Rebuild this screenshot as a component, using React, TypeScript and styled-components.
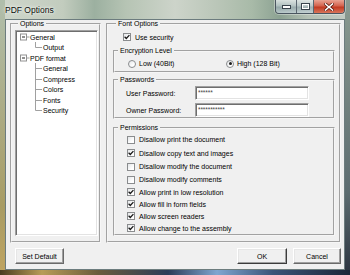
import styled, { createGlobalStyle } from 'styled-components';

const GlobalStyle = createGlobalStyle`
  html, body {
    margin: 0;
    padding: 0;
    background: #9fb0a2;
  }
  body {
    font-family: "Liberation Sans", Arial, sans-serif;
    color: #000;
  }
`;

const Window = styled.div`
  width: 350px;
  height: 275px;
  box-sizing: border-box;
  display: flex;
  flex-direction: column;
  overflow: hidden;
  background:
    linear-gradient(90deg, #4a3c22 0%, #b89c58 12%, #6a5c3c 28%, #2c3c58 48%, #7fa6d0 62%, #3a5478 78%, #1c2636 100%) bottom / 100% 5px no-repeat,
    linear-gradient(180deg, #b0beac 0%, #a89c64 75%, #c0a460 100%) left / 5px 100% no-repeat,
    linear-gradient(180deg, #8a9a90 0%, #5c6c70 70%, #2c3440 100%) right / 5px 100% no-repeat,
    linear-gradient(90deg, #cfd6cb 0%, #c2ccbe 18%, #9cb0a0 27%, #b6c4b4 36%, #cdd4ca 50%, #bac6b8 62%, #a8baa8 72%, #8ca292 80%, #b4c0b4 88%, #c4ccc4 100%);
`;

const TitleBar = styled.div`
  height: 19px;
  display: flex;
  align-items: flex-start;
  padding: 0 5px;
  flex-shrink: 0;
`;

const Title = styled.span`
  font-size: 8.5px;
  line-height: 20px;
  color: #0c0c0c;
  text-shadow: 0 0 4px #f4f8f4, 0 0 2px #f4f8f4;
`;

const Controls = styled.div`
  margin-left: auto;
  display: flex;
  height: 13px;
  border: 1px solid #4a5660;
  border-top: none;
  border-radius: 0 0 4px 4px;
  overflow: hidden;
  box-shadow: 0 0 0 1px rgba(255, 255, 255, 0.35);
`;

const ControlButton = styled.div<{ $w: number; $close?: boolean }>`
  width: ${(p) => p.$w}px;
  display: flex;
  align-items: center;
  justify-content: center;
  background: ${(p) =>
    p.$close
      ? 'linear-gradient(180deg, #e8a393 0%, #d4634e 45%, #c23a22 55%, #d8755a 100%)'
      : 'linear-gradient(180deg, rgba(240,244,246,.75) 0%, rgba(190,204,210,.7) 45%, rgba(150,168,176,.7) 55%, rgba(200,214,220,.75) 100%)'};
  & + & {
    border-left: 1px solid #5a6670;
  }
`;

const Client = styled.div`
  flex: 1;
  margin: 0 5px 5px;
  background: #f0f0f0;
  border: 1px solid #6c7c7e;
  padding: 0 3px 0 4px;
  display: flex;
  flex-direction: column;
  color: #000;
`;

const Groups = styled.div`
  display: flex;
  gap: 5px;
  height: 223px;
`;

const Group = styled.fieldset<{ $width?: number; $pad?: string }>`
  margin: 0;
  min-width: 0;
  box-sizing: border-box;
  border: 2px groove #f6f6f6;
  padding: ${(p) => p.$pad ?? '0'};
  ${(p) => (p.$width ? `width: ${p.$width}px; flex-shrink: 0;` : 'flex: 1;')}
`;

const SubGroup = styled(Group)<{ $top: number }>`
  margin-top: ${(p) => p.$top}px;
`;

const Legend = styled.legend`
  font-size: 7px;
  line-height: 8px;
  padding: 0 2px;
  margin-left: 3px;
`;

const LegendText = styled.span`
  color: #000;
`;

const Tree = styled.div`
  width: 83px;
  height: 206px;
  box-sizing: border-box;
  margin-top: 2px;
  background: #fff;
  border: 1px solid;
  border-color: #a0a0a0 #ffffff #ffffff #a0a0a0;
  box-shadow: inset 1px 1px 0 #6e6e6e, inset -1px -1px 0 #e3e3e3;
  padding-top: 1px;
`;

const TreeRow = styled.div<{ $h: number }>`
  display: flex;
  align-items: center;
  height: ${(p) => p.$h}px;
  font-size: 7px;
  white-space: nowrap;
`;

const TreeLabel = styled.span`
  color: #000;
`;

const CheckRow = styled.div<{ $indent: number; $h?: number; $top?: number }>`
  display: flex;
  align-items: center;
  gap: 4px;
  height: ${(p) => p.$h ?? 10}px;
  margin-top: ${(p) => p.$top ?? 0}px;
  padding-left: ${(p) => p.$indent}px;
  font-size: 7px;
  white-space: nowrap;
`;

const Box = styled.span<{ $round?: boolean }>`
  width: 8px;
  height: 8px;
  box-sizing: border-box;
  flex-shrink: 0;
  border: 1px solid #8a8c8e;
  border-radius: ${(p) => (p.$round ? '50%' : '0')};
  background: linear-gradient(135deg, #e4e6e8 0%, #ffffff 70%);
  display: flex;
  align-items: center;
  justify-content: center;
`;

const Dot = styled.span`
  width: 3px;
  height: 3px;
  border-radius: 50%;
  background: #1c1c1c;
`;

const RadioRow = styled.div`
  display: flex;
  height: 9px;
  margin-top: 4px;
  padding-left: 13px;
`;

const RadioItem = styled.div<{ $width?: number }>`
  display: flex;
  align-items: center;
  gap: 3px;
  font-size: 7px;
  white-space: nowrap;
  ${(p) => (p.$width ? `width: ${p.$width}px;` : '')}
`;

const FieldRow = styled.div<{ $top: number }>`
  display: flex;
  align-items: center;
  margin-top: ${(p) => p.$top}px;
  padding-left: 11px;
`;

const FieldLabel = styled.span`
  width: 69px;
  font-size: 7px;
  white-space: nowrap;
`;

const PasswordBox = styled.div`
  width: 114px;
  height: 14px;
  box-sizing: border-box;
  background: #fff;
  border: 1px solid;
  border-color: #a0a0a0 #ffffff #ffffff #a0a0a0;
  box-shadow: inset 1px 1px 0 #6e6e6e, inset -1px -1px 0 #e3e3e3;
  padding: 0 2px;
  font-size: 6.5px;
  line-height: 11px;
  color: #444;
  letter-spacing: -0.1px;
`;

const PermList = styled.div`
  display: flex;
  flex-direction: column;
  padding: 1px 0 0;
`;

const ButtonBar = styled.div`
  display: flex;
  gap: 6px;
  margin-top: 5px;
  padding-left: 5px;
`;

const Button = styled.div<{ $width: number; $default?: boolean }>`
  width: ${(p) => p.$width}px;
  height: 16px;
  box-sizing: border-box;
  display: flex;
  align-items: center;
  justify-content: center;
  font-size: 7px;
  background: #f0f0f0;
  border: 1px solid;
  border-color: #ffffff ${(p) => (p.$default ? '#3c3c3c' : '#6a6a6a')} ${(p) => (p.$default ? '#3c3c3c' : '#6a6a6a')} #ffffff;
  box-shadow: inset -1px -1px 0 #a0a0a0, inset 1px 1px 0 #e6e6e6;
  &:first-child {
    margin-right: auto;
  }
`;

const CheckMark = () => (
  <svg width="6" height="6" viewBox="0 0 6 6">
    <path d="M0.6 2.8 L2.3 4.5 L5.4 1.1" fill="none" stroke="#1a1a1a" strokeWidth="1.3" />
  </svg>
);

const Check = ({ on }: { on?: boolean }) => <Box>{on && <CheckMark />}</Box>;

const Radio = ({ on }: { on?: boolean }) => <Box $round>{on && <Dot />}</Box>;

const RootLines = ({ h }: { h: number }) => (
  <svg width="14" height={h} viewBox={`0 0 14 ${h}`}>
    <rect x="4.5" y={h / 2 - 3} width="6" height="6" fill="#fff" stroke="#919191" strokeWidth="1" />
    <line x1="6" y1={h / 2} x2="9" y2={h / 2} stroke="#222" strokeWidth="1" />
    <line x1="10.5" y1={h / 2} x2="13.5" y2={h / 2} stroke="#a0a0a0" strokeWidth="1" />
  </svg>
);

const ChildLines = ({ h, last }: { h: number; last?: boolean }) => (
  <svg width="27" height={h} viewBox={`0 0 27 ${h}`}>
    <line x1="19.5" y1="0" x2="19.5" y2={last ? 5.5 : h} stroke="#a0a0a0" strokeWidth="1" />
    <line x1="19.5" y1="5.5" x2="26" y2="5.5" stroke="#a0a0a0" strokeWidth="1" />
  </svg>
);

const tree: { label: string; root?: boolean; last?: boolean }[] = [
  { label: 'General', root: true },
  { label: 'Output', last: true },
  { label: 'PDF format', root: true },
  { label: 'General' },
  { label: 'Compress' },
  { label: 'Colors' },
  { label: 'Fonts' },
  { label: 'Security', last: true },
];

const permissions: [string, boolean, number][] = [
  ['Disallow print the document', false, 13],
  ['Disallow copy text and images', true, 14],
  ['Disallow modify the document', false, 13],
  ['Disallow modify comments', false, 13],
  ['Allow print in low resolution', true, 12],
  ['Allow fill in form fields', true, 12],
  ['Allow screen readers', true, 12],
  ['Allow change to the assembly', true, 12],
];

export default function App() {
  return (
    <>
      <GlobalStyle />
      <Window>
        <TitleBar>
          <Title>PDF Options</Title>
          <Controls>
            <ControlButton $w={20}>
              <svg width="9" height="4" viewBox="0 0 9 4">
                <rect x="0.5" y="0.5" width="8" height="3" fill="#fff" stroke="#38434c" strokeWidth="1" />
              </svg>
            </ControlButton>
            <ControlButton $w={16}>
              <svg width="9" height="7" viewBox="0 0 9 7">
                <rect x="0.5" y="0.5" width="8" height="6" fill="none" stroke="#38434c" strokeWidth="1" />
                <rect x="1.5" y="1.5" width="6" height="4" fill="none" stroke="#fff" strokeWidth="1" />
              </svg>
            </ControlButton>
            <ControlButton $w={30} $close>
              <svg width="10" height="8" viewBox="0 0 10 8">
                <path d="M1.5 1 L8.5 7 M8.5 1 L1.5 7" stroke="#5a1a10" strokeWidth="3" strokeLinecap="square" />
                <path d="M1.5 1 L8.5 7 M8.5 1 L1.5 7" stroke="#fff" strokeWidth="1.6" strokeLinecap="square" />
              </svg>
            </ControlButton>
          </Controls>
        </TitleBar>
        <Client>
          <Groups>
            <Group $width={91} $pad="0 2px 0 3px">
              <Legend>
                <LegendText>Options</LegendText>
              </Legend>
              <Tree>
                {tree.map((n, i) => {
                  const h = i % 2 ? 11 : 10;
                  return (
                    <TreeRow key={i} $h={h}>
                      {n.root ? <RootLines h={h} /> : <ChildLines h={h} last={n.last} />}
                      <TreeLabel>{n.label}</TreeLabel>
                    </TreeRow>
                  );
                })}
              </Tree>
            </Group>
            <Group $pad="0 4px 0 5px">
              <Legend>
                <LegendText>Font Options</LegendText>
              </Legend>
              <CheckRow $indent={10} $top={4}>
                <Check on />
                Use security
              </CheckRow>
              <SubGroup $top={5} $pad="0 0 3px 0">
                <Legend>
                  <LegendText>Encryption Level</LegendText>
                </Legend>
                <RadioRow>
                  <RadioItem $width={98}>
                    <Radio />
                    Low (40Bit)
                  </RadioItem>
                  <RadioItem>
                    <Radio on />
                    High (128 Bit)
                  </RadioItem>
                </RadioRow>
              </SubGroup>
              <SubGroup $top={3} $pad="0">
                <Legend>
                  <LegendText>Passwords</LegendText>
                </Legend>
                <FieldRow $top={2}>
                  <FieldLabel>User Password:</FieldLabel>
                  <PasswordBox>******</PasswordBox>
                </FieldRow>
                <FieldRow $top={3}>
                  <FieldLabel>Owner Password:</FieldLabel>
                  <PasswordBox>***********</PasswordBox>
                </FieldRow>
              </SubGroup>
              <SubGroup $top={5} $pad="0">
                <Legend>
                  <LegendText>Permissions</LegendText>
                </Legend>
                <PermList>
                  {permissions.map(([label, on, h]) => (
                    <CheckRow key={label} $indent={12} $h={h}>
                      <Check on={on} />
                      {label}
                    </CheckRow>
                  ))}
                </PermList>
              </SubGroup>
            </Group>
          </Groups>
          <ButtonBar>
            <Button $width={49}>Set Default</Button>
            <Button $width={50} $default>
              OK
            </Button>
            <Button $width={48}>Cancel</Button>
          </ButtonBar>
        </Client>
      </Window>
    </>
  );
}
